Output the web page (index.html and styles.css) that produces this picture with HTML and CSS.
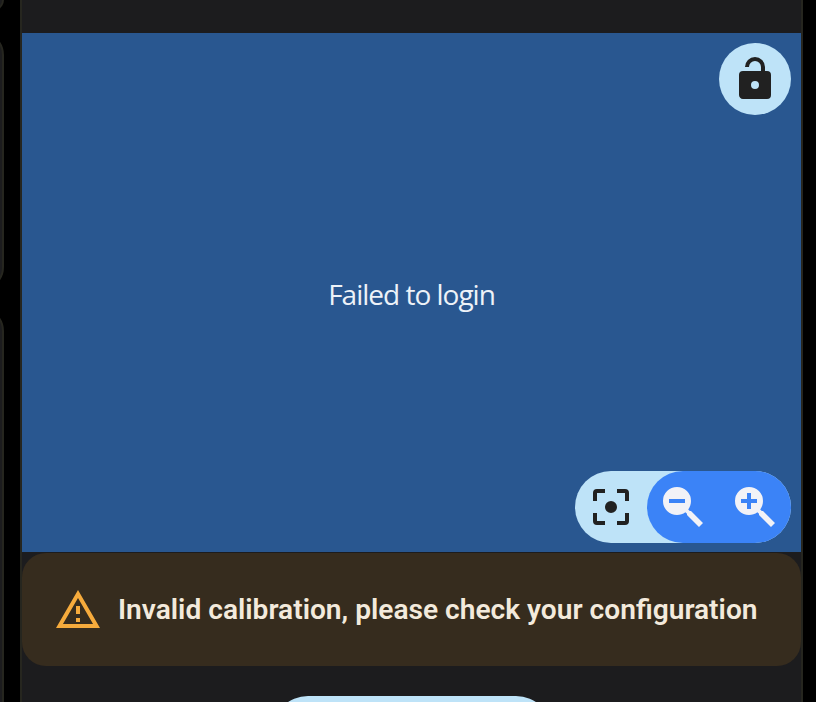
FILE: index.html
```html
<!DOCTYPE html>
<html lang="en">
<head>
<meta charset="UTF-8">
<meta name="viewport" content="width=device-width, initial-scale=1.0">
<title>Camera</title>
<link rel="stylesheet" href="styles.css">
</head>
<body>
<div class="dashboard">
    <div class="sidebar">
        <div class="side-card side-first"></div>
        <div class="side-card side-middle"></div>
        <div class="side-card side-last"></div>
    </div>

    <div class="card">
        <div class="camera">
            <button class="lock" aria-label="Unlock">
                <svg class="icon" viewBox="0 0 24 24"><path d="M18,8A2,2 0 0,1 20,10V20A2,2 0 0,1 18,22H6C4.89,22 4,21.1 4,20V10A2,2 0 0,1 6,8H15V6A3,3 0 0,0 12,3A3,3 0 0,0 9,6H7A5,5 0 0,1 12,1A5,5 0 0,1 17,6V8H18M12,17A2,2 0 0,0 14,15A2,2 0 0,0 12,13A2,2 0 0,0 10,15A2,2 0 0,0 12,17Z"/></svg>
            </button>
            <p class="camera-text">Failed to login</p>
            <div class="tools">
                <button class="tool" aria-label="Focus">
                    <svg class="icon" viewBox="0 0 24 24"><path d="M5,15H3V19A2,2 0 0,0 5,21H9V19H5M5,5H9V3H5A2,2 0 0,0 3,5V9H5M19,3H15V5H19V9H21V5A2,2 0 0,0 19,3M19,19H15V21H19A2,2 0 0,0 21,19V15H19M12,9A3,3 0 0,0 9,12A3,3 0 0,0 12,15A3,3 0 0,0 15,12A3,3 0 0,0 12,9Z"/></svg>
                </button>
                <div class="zoom">
                    <button class="tool" aria-label="Zoom out">
                        <svg class="icon" viewBox="0 0 24 24"><path d="M9,2A7,7 0 0,1 16,9C16,10.57 15.5,12 14.61,13.19L15.41,14H16L22,20L20,22L14,16V15.41L13.19,14.61C12,15.5 10.57,16 9,16A7,7 0 0,1 2,9A7,7 0 0,1 9,2M5,8V10H13V8H5Z"/></svg>
                    </button>
                    <button class="tool" aria-label="Zoom in">
                        <svg class="icon" viewBox="0 0 24 24"><path d="M9,2A7,7 0 0,1 16,9C16,10.57 15.5,12 14.61,13.19L15.41,14H16L22,20L20,22L14,16V15.41L13.19,14.61C12,15.5 10.57,16 9,16A7,7 0 0,1 2,9A7,7 0 0,1 9,2M8,5V8H5V10H8V13H10V10H13V8H10V5H8Z"/></svg>
                    </button>
                </div>
            </div>
        </div>

        <div class="alert">
            <svg class="icon alert-icon" viewBox="0 0 24 24"><path d="M12,2L1,21H23M12,6L19.53,19H4.47M11,10V14H13V10M11,16V18H13V16"/></svg>
            <span class="alert-text">Invalid calibration, please check your configuration</span>
        </div>

        <button class="action" aria-label="Action"></button>
    </div>
</div>
</body>
</html>
```
FILE: styles.css
```css
* {
    box-sizing: border-box;
}
body {
    margin: 0;
    background-color: #000;
    font-family: Roboto, "Liberation Sans", sans-serif;
    overflow: hidden;
}
button {
    padding: 0;
    border: 0;
    background: none;
    color: inherit;
}
.dashboard {
    display: flex;
    gap: 16px;
    height: 702px;
    overflow: hidden;
}
.sidebar {
    display: flex;
    flex-direction: column;
    align-items: flex-end;
    gap: 16px;
    width: 4px;
    height: 702px;
    overflow: hidden;
}
.side-card {
    flex: none;
    width: 80px;
    border: 2px solid #26261f;
    border-radius: 24px;
    background-color: #1c1c1e;
}
.side-first {
    height: 15px;
    border-top: 0;
    border-radius: 0 0 24px 24px / 0 0 15px 15px;
}
.side-middle {
    height: 260px;
}
.side-last {
    height: 500px;
}
.card {
    flex: none;
    width: 783px;
    height: 702px;
    padding-top: 33px;
    border: solid #26261f;
    border-width: 0 2px;
    background-color: #1c1c1e;
    overflow: hidden;
}
.camera {
    display: flex;
    flex-direction: column;
    align-items: flex-end;
    justify-content: space-between;
    height: 519px;
    padding: 10px 10px 9px;
    background-color: #295790;
}
.icon {
    display: block;
    flex: none;
    width: 48px;
    height: 48px;
    fill: currentColor;
}
.lock {
    display: grid;
    place-items: center;
    width: 72px;
    height: 72px;
    border-radius: 50%;
    background-color: #bee3f8;
    color: #212121;
}
.camera-text {
    align-self: center;
    margin: 0;
    padding-top: 2px;
    color: #edf2f8;
    font-family: "Open Sans", sans-serif;
    font-size: 28px;
    line-height: 34px;
    letter-spacing: -1px;
}
.tools {
    display: flex;
    height: 72px;
    border-radius: 36px;
    background-color: #bee3f8;
    color: #212121;
}
.tool {
    display: grid;
    place-items: center;
    width: 72px;
    height: 72px;
}
.zoom {
    display: flex;
    border-radius: 36px;
    background-color: #3b83f7;
    color: #f2f2f7;
}
.alert {
    display: flex;
    align-items: center;
    gap: 16px;
    height: 113px;
    margin-top: 1px;
    padding-left: 32px;
    border-radius: 24px;
    background-color: #362c1e;
}
.alert-icon {
    color: #f6ab3c;
}
.alert-text {
    color: #f3eadc;
    font-size: 28.14px;
    font-weight: 600;
    white-space: nowrap;
}
.action {
    display: block;
    width: 280px;
    height: 72px;
    margin: 30px auto 0;
    border-radius: 36px;
    background-color: #bee3f8;
}
```
